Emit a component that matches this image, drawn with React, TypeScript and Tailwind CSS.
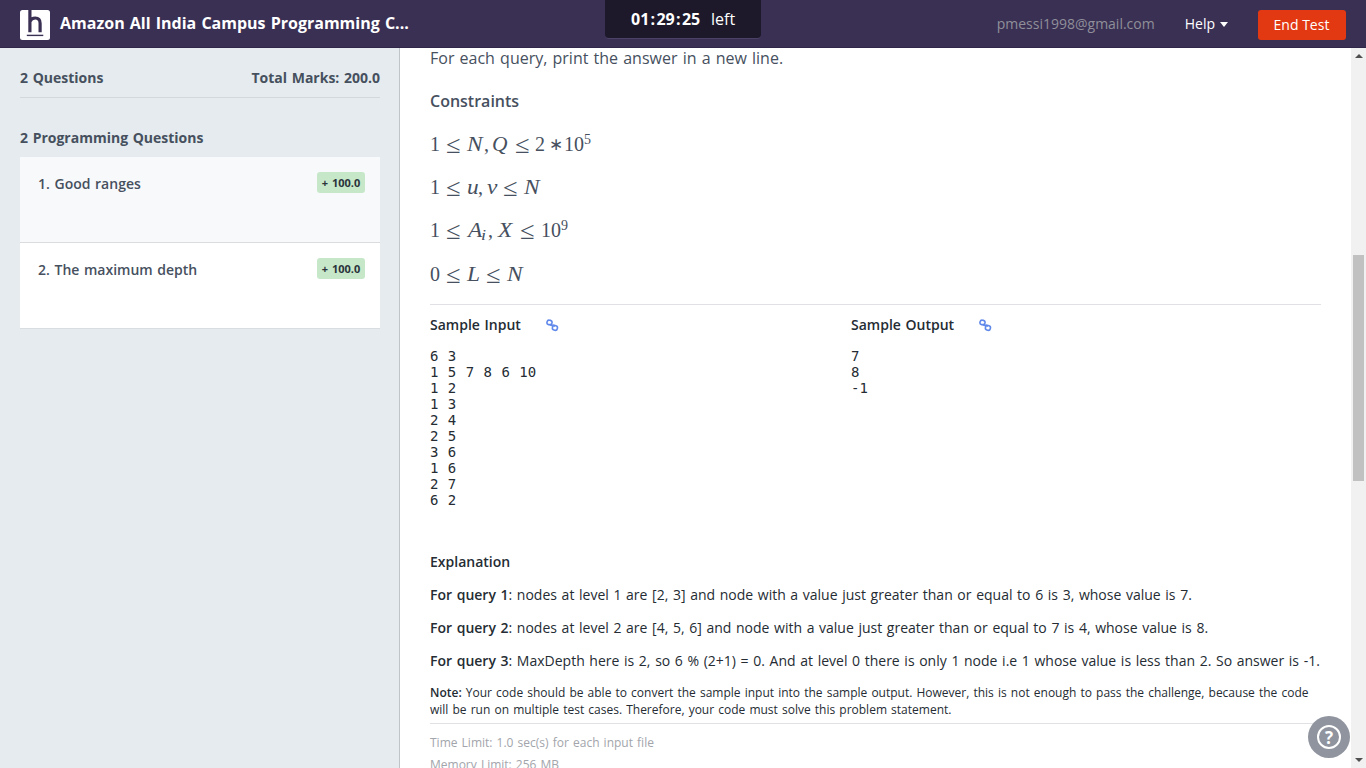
import React from "react";

type Token = { t: string; w: string; cls?: string };

const rows: Token[][] = [
  [
    { t: "1", w: "w-[16px]" },
    { t: "≤", w: "w-[21px]", cls: "le" },
    { t: "N", w: "w-[17px]", cls: "i" },
    { t: ",", w: "w-[8px]" },
    { t: "Q", w: "w-[23px]", cls: "q" },
    { t: "≤", w: "w-[20px]", cls: "le" },
    { t: "2", w: "w-[14px]" },
    { t: "∗", w: "w-[15px]", cls: "ast" },
    { t: "10", w: "w-[20px]" },
    { t: "5", w: "w-[8px]", cls: "sup" },
  ],
  [
    { t: "1", w: "w-[16px]" },
    { t: "≤", w: "w-[21px]", cls: "le" },
    { t: "u", w: "w-[11px]", cls: "i" },
    { t: ",", w: "w-[9px]" },
    { t: "v", w: "w-[16px]", cls: "i" },
    { t: "≤", w: "w-[21px]", cls: "le" },
    { t: "N", w: "w-[18px]", cls: "i" },
  ],
  [
    { t: "1", w: "w-[16px]" },
    { t: "≤", w: "w-[22px]", cls: "le" },
    { t: "A", w: "w-[14px]", cls: "i" },
    { t: "i", w: "w-[6px]", cls: "sub" },
    { t: ",", w: "w-[10px]" },
    { t: "X", w: "w-[22px]", cls: "i" },
    { t: "≤", w: "w-[21px]", cls: "le" },
    { t: "10", w: "w-[20px]" },
    { t: "9", w: "w-[8px]", cls: "sup" },
  ],
  [
    { t: "0", w: "w-[16px]" },
    { t: "≤", w: "w-[21px]", cls: "le" },
    { t: "L", w: "w-[19px]", cls: "i" },
    { t: "≤", w: "w-[21px]", cls: "le" },
    { t: "N", w: "w-[18px]", cls: "i" },
  ],
];

const tokenStyle: Record<string, string> = {
  i: "italic origin-left scale-x-[1.17]",
  q: "italic origin-left scale-x-[1.07]",
  le: "text-[25px] translate-y-[2px] origin-left scale-x-[1.06]",
  ast: "text-[17px] -translate-y-[1px]",
  sup: "text-[14px] -translate-y-[7px]",
  sub: "text-[14px] italic translate-y-[3px] scale-x-[1.3]",
};

function MathRow({ tokens }: { tokens: Token[] }) {
  return (
    <div className="flex h-[43.2px] items-baseline whitespace-nowrap font-['Liberation_Serif',serif] text-[20px] leading-[24px] text-[#46505e]">
      {tokens.map((k, n) => (
        <span key={n} className={`inline-block shrink-0 leading-[24px] ${k.w} ${k.cls ? tokenStyle[k.cls] : ""}`}>
          {k.t}
        </span>
      ))}
    </div>
  );
}

function LinkIcon() {
  return (
    <svg width="13" height="13" viewBox="0 0 13 13" fill="none" stroke="#6089ea" strokeWidth="1.6">
      <rect x="1" y="1.2" width="5" height="4.6" rx="2.1" transform="rotate(15 3.5 3.5)" />
      <rect x="6.4" y="6.6" width="5" height="4.6" rx="2.1" transform="rotate(15 9 9)" />
      <path d="M4 4.6C4.2 6.4 5.6 6.9 6.8 6.2M5.6 6.4C6.8 5.4 8.4 6 8.5 7.8" strokeWidth="1.3" />
    </svg>
  );
}

function Question({ title, active }: { title: string; active?: boolean }) {
  return (
    <div className={`flex h-[86px] items-start justify-between border-b border-[#dadde0] pl-[18px] pr-[15px] pt-[15px] ${active ? "bg-[#f8f9fb]" : "bg-white"}`}>
      <span className="pt-[2px] text-[14px] font-semibold leading-[20px]">{title}</span>
      <span className="h-[21px] w-12 rounded-[3px] bg-[#c6e8c9] text-center text-[11px] font-bold leading-[21px] text-[#2b333b]">+ 100.0</span>
    </div>
  );
}

export default function App() {
  return (
    <div className="flex h-[768px] w-[1366px] flex-col overflow-hidden bg-white font-['Open_Sans',sans-serif] text-[14px] text-[#46505e] [word-spacing:1px]">
      <header className="flex h-12 shrink-0 items-start justify-between border-b border-[#2f2648] bg-[#3a3054]">
        <div className="flex w-[605px] items-start pl-5 pt-[10px]">
          <svg width="30" height="30" viewBox="0 0 30 30">
            <rect width="30" height="30" rx="2.5" fill="#fff" />
            <path d="M9.9 0V22.3M9.9 11.5C10.9 9.2 12.8 8 15.2 8C18.5 8 20.1 9.8 20.1 13.2V22.3" fill="none" stroke="#3a3054" strokeWidth="3.2" />
            <path d="M6.8 25.4H23.3" stroke="#3a3054" strokeWidth="1.4" />
          </svg>
          <h1 className="ml-[10px] whitespace-nowrap text-[16px] font-bold leading-[26px] text-white">Amazon All India Campus Programming C...</h1>
        </div>
        <div className="flex h-[39px] w-[156px] rounded-b-[4px] border-b border-[#4c4268] bg-[#1d192b] pl-[26px] text-[16px] leading-[38px] text-white">
          <span className="w-[80px] font-bold">
            01<span className="mx-[1.3px]">:</span>29<span className="mx-[1.3px]">:</span>25
          </span>
          <span>left</span>
        </div>
        <div className="flex w-[605px] items-start justify-end pr-5 pt-[10px] text-white">
          <span className="mr-[30px] leading-[28px] text-[#8f8f99]">pmessi1998@gmail.com</span>
          <span className="flex items-center leading-[28px]">
            Help
            <span className="ml-[5px] border-x-[4px] border-t-[5px] border-x-transparent border-t-white" />
          </span>
          <button className="ml-[30px] h-[30px] w-[88px] rounded-[3px] bg-[#e23913] pr-px text-[14px] leading-[30px]">End Test</button>
        </div>
      </header>
      <div className="flex min-h-0 flex-1">
        <aside className="w-[400px] shrink-0 border-r border-[#bfc4c9] bg-[#e5ebee] pl-5 pr-[19px]">
          <div className="flex h-[50px] justify-between border-b border-[#d3d8dd] pt-5 font-bold leading-[20px]">
            <span>2 Questions</span>
            <span>Total Marks: 200.0</span>
          </div>
          <h2 className="pb-[9px] pt-[30px] font-bold leading-[20px]">2 Programming Questions</h2>
          <Question title="1. Good ranges" active />
          <Question title="2. The maximum depth" />
        </aside>
        <main className="min-w-0 flex-1 overflow-hidden pl-[30px] pr-[30px]">
          <p className="text-[16px] leading-[20px]">For each query, print the answer in a new line.</p>
          <h3 className="pb-[19px] pt-[22px] text-[16px] font-semibold leading-[22px]">Constraints</h3>
          <div className="h-[173px]">
            {rows.map((r, n) => (
              <MathRow key={n} tokens={r} />
            ))}
          </div>
          <section className="flex border-t border-[#dfe1e4] text-[#252c33]">
            <div className="w-[421px]">
              <h4 className="flex h-[43px] items-start pt-[10px] font-semibold leading-[20px]">
                Sample Input
                <span className="ml-[25px] mt-[4px]"><LinkIcon /></span>
              </h4>
              <pre className="font-['DejaVu_Sans_Mono',monospace] text-[14px] leading-[16px]">{"6 3\n1 5 7 8 6 10\n1 2\n1 3\n2 4\n2 5\n3 6\n1 6\n2 7\n6 2"}</pre>
            </div>
            <div>
              <h4 className="flex h-[43px] items-start pt-[10px] font-semibold leading-[20px]">
                Sample Output
                <span className="ml-[25px] mt-[4px]"><LinkIcon /></span>
              </h4>
              <pre className="font-['DejaVu_Sans_Mono',monospace] text-[14px] leading-[16px]">{"7\n8\n-1"}</pre>
            </div>
          </section>
          <section className="whitespace-nowrap pt-[44px] leading-[20px] text-[#252c33]">
            <h4 className="mb-[13px] font-semibold">Explanation</h4>
            <p className="mb-[13px]"><b className="font-semibold">For query 1</b>: nodes at level 1 are [2, 3] and node with a value just greater than or equal to 6 is 3, whose value is 7.</p>
            <p className="mb-[13px]"><b className="font-semibold">For query 2</b>: nodes at level 2 are [4, 5, 6] and node with a value just greater than or equal to 7 is 4, whose value is 8.</p>
            <p className="mb-[13px]"><b className="font-semibold">For query 3</b>: MaxDepth here is 2, so 6 % (2+1) = 0. And at level 0 there is only 1 node i.e 1 whose value is less than 2. So answer is -1.</p>
          </section>
          <p className="whitespace-nowrap border-b border-[#dfe1e4] pb-[5px] text-[12px] leading-[17px] text-[#252c33]">
            <span className="font-semibold">Note:</span> Your code should be able to convert the sample input into the sample output. However, this is not enough to pass the challenge, because the code<br />
            will be run on multiple test cases. Therefore, your code must solve this problem statement.
          </p>
          <div className="pt-2 text-[12px] leading-[22px] text-[#a2a5ab]">
            <p>Time Limit: 1.0 sec(s) for each input file</p>
            <p>Memory Limit: 256 MB</p>
          </div>
        </main>
        <div className="flex w-[15px] shrink-0 flex-col items-center bg-[#f1f1f1]">
          <span className="mt-[6px] border-x-[4px] border-b-[4px] border-x-transparent border-b-[#505050]" />
          <span className="mt-[197px] h-[226px] w-[11px] bg-[#c1c1c1]" />
          <span className="mb-[6px] mt-auto border-x-[4px] border-t-[4px] border-x-transparent border-t-[#505050]" />
        </div>
      </div>
      <div className="absolute left-[1308px] top-[716px] flex h-[42px] w-[42px] items-center justify-center rounded-full bg-[#8f949e]">
        <span className="flex h-6 w-6 items-center justify-center rounded-full border-2 border-white text-[17px] font-bold leading-none text-white">?</span>
      </div>
    </div>
  );
}
